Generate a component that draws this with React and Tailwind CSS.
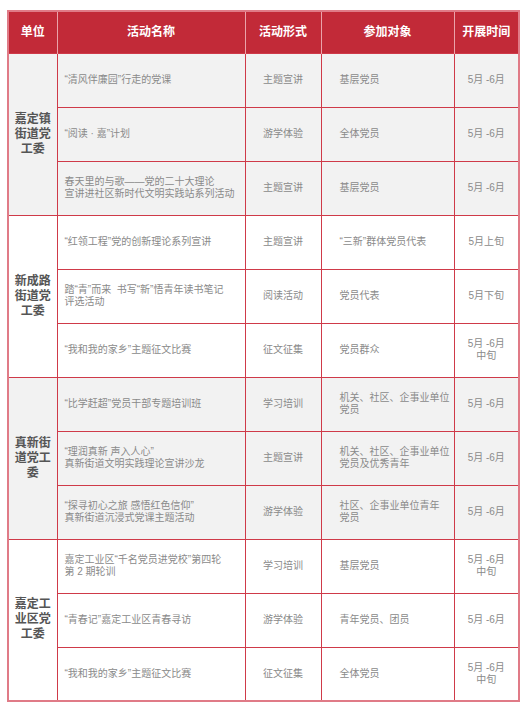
const groups = [
  {
    unit: "嘉定镇街道党工委",
    bg: "bg-[#f2f2f2]",
    rows: [
      { name: ["“清风伴廉园”行走的党课"], form: "主题宣讲", target: ["基层党员"], time: ["5月 -6月"] },
      { name: ["“阅读 · 嘉”计划"], form: "游学体验", target: ["全体党员"], time: ["5月 -6月"] },
      {
        name: ["春天里的与歌——党的二十大理论", "宣讲进社区新时代文明实践站系列活动"],
        form: "主题宣讲",
        target: ["基层党员"],
        time: ["5月 -6月"],
      },
    ],
  },
  {
    unit: "新成路街道党工委",
    bg: "bg-white",
    rows: [
      { name: ["“红领工程”党的创新理论系列宣讲"], form: "主题宣讲", target: ["“三新”群体党员代表"], time: ["5月上旬"] },
      {
        name: ["踏“青”而来  书写“新”悟青年读书笔记", "评选活动"],
        form: "阅读活动",
        target: ["党员代表"],
        time: ["5月下旬"],
      },
      { name: ["“我和我的家乡”主题征文比赛"], form: "征文征集", target: ["党员群众"], time: ["5月 -6月", "中旬"] },
    ],
  },
  {
    unit: "真新街道党工委",
    bg: "bg-[#f2f2f2]",
    rows: [
      {
        name: ["“比学赶超”党员干部专题培训班"],
        form: "学习培训",
        target: ["机关、社区、企事业单位", "党员"],
        time: ["5月 -6月"],
      },
      {
        name: ["“理润真新 声入人心”", "真新街道文明实践理论宣讲沙龙"],
        form: "主题宣讲",
        target: ["机关、社区、企事业单位", "党员及优秀青年"],
        time: ["5月 -6月"],
      },
      {
        name: ["“探寻初心之旅 感悟红色信仰”", "真新街道沉浸式党课主题活动"],
        form: "游学体验",
        target: ["社区、企事业单位青年", "党员"],
        time: ["5月 -6月"],
      },
    ],
  },
  {
    unit: "嘉定工业区党工委",
    bg: "bg-white",
    rows: [
      {
        name: ["嘉定工业区“千名党员进党校”第四轮", "第 2 期轮训"],
        form: "学习培训",
        target: ["基层党员"],
        time: ["5月 -6月", "中旬"],
      },
      { name: ["“青春记”嘉定工业区青春寻访"], form: "游学体验", target: ["青年党员、团员"], time: ["5月 -6月"] },
      { name: ["“我和我的家乡”主题征文比赛"], form: "征文征集", target: ["全体党员"], time: ["5月 -6月", "中旬"] },
    ],
  },
];

const font = { fontFamily: '"Liberation Sans", "Noto Sans CJK SC", sans-serif' };

function Lines({ items }) {
  return items.map((t, i) => (
    <div key={i} className="whitespace-pre">
      {t}
    </div>
  ));
}

export default function App() {
  const cell = "border border-[#cf3a49] align-middle";
  return (
    <div className="w-[525px] h-[706px] bg-white pt-[10px] pl-[7px]" style={font}>
      <table className="table-fixed border-collapse w-[511px] border-2 border-[#e07b87]">
        <colgroup>
          <col className="w-[49px]" />
          <col className="w-[188px]" />
          <col className="w-[76px]" />
          <col className="w-[133px]" />
          <col className="w-[65px]" />
        </colgroup>
        <thead>
          <tr className="h-[42px] bg-[#c22a38] text-white text-[12px] font-bold">
            <th className="border-r border-[#eaa3aa]">单位</th>
            <th className="border-r border-[#eaa3aa]">活动名称</th>
            <th className="border-r border-[#eaa3aa]">活动形式</th>
            <th className="border-r border-[#eaa3aa]">参加对象</th>
            <th>开展时间</th>
          </tr>
        </thead>
        <tbody className="text-[10px] leading-[12px] text-[#8a8a8a]">
          {groups.map((g) =>
            g.rows.map((r, i) => (
              <tr key={g.unit + i} className={`h-[54px] ${g.bg}`}>
                {i === 0 && (
                  <td rowSpan={3} className={`${cell} text-center`}>
                    <div className="mx-auto w-[37px] break-all text-[12px] leading-[15px] font-bold text-[#555]">
                      {g.unit}
                    </div>
                  </td>
                )}
                <td className={`${cell} pl-[7px]`}>
                  <Lines items={r.name} />
                </td>
                <td className={`${cell} text-center`}>{r.form}</td>
                <td className={`${cell} pl-[18px]`}>
                  <Lines items={r.target} />
                </td>
                <td className={`${cell} text-center`}>
                  <Lines items={r.time} />
                </td>
              </tr>
            ))
          )}
        </tbody>
      </table>
    </div>
  );
}
